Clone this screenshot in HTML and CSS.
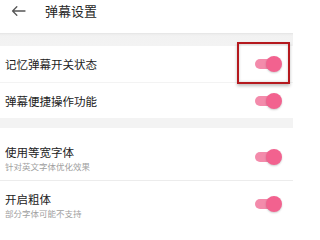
FILE: index.html
```html
<!DOCTYPE html>
<html lang="zh">
<head>
<meta charset="utf-8">
<link rel="stylesheet" href="styles.css">
</head>
<body>
<div class="page">
  <header class="header">
    <svg class="back" width="15" height="10" viewBox="0 0 15 10"><path d="M14 5H1.6M5.8 0.8L1.6 5L5.8 9.2" fill="none" stroke="#555" stroke-width="1.3" stroke-linecap="round" stroke-linejoin="round"/></svg>
    <div class="title">弹幕设置</div>
  </header>
  <div class="gap gap-top"></div>
  <section class="group">
    <div class="row row-a">
      <div class="label">记忆弹幕开关状态</div>
      <div class="toggle"><span class="track"></span><span class="thumb"></span></div>
    </div>
    <div class="row row-b">
      <div class="label">弹幕便捷操作功能</div>
      <div class="toggle"><span class="track"></span><span class="thumb"></span></div>
    </div>
  </section>
  <div class="gap gap-mid"></div>
  <section class="group">
    <div class="row row-c">
      <div class="texts">
        <div class="label">使用等宽字体</div>
        <div class="sub">针对英文字体优化效果</div>
      </div>
      <div class="toggle"><span class="track"></span><span class="thumb"></span></div>
    </div>
    <div class="row row-d">
      <div class="texts">
        <div class="label">开启粗体</div>
        <div class="sub">部分字体可能不支持</div>
      </div>
      <div class="toggle"><span class="track"></span><span class="thumb"></span></div>
    </div>
  </section>
  <div class="highlight"></div>
</div>
</body>
</html>
```
FILE: styles.css
```css
html, body {
  margin: 0;
  padding: 0;
  background: #fff;
}
body {
  font-family: "Noto Sans CJK SC", "Noto Sans", sans-serif;
  color: #222;
  overflow: hidden;
}
.page {
  position: relative;
  width: 293px;
  height: 225px;
  overflow: hidden;
}
.header {
  height: 33px;
  box-sizing: border-box;
  padding-top: 4px;
  display: flex;
  align-items: flex-start;
  background: #fff;
}
.back {
  margin-left: 11px;
  margin-top: 2px;
  display: block;
}
.title {
  margin-left: 19px;
  font-size: 13px;
  line-height: 14px;
  color: #262626;
}
.gap {
  background: #f3f3f3;
}
.gap-top {
  height: 13px;
  background: linear-gradient(#e2e2e2 0, #ececec 1px, #f2f2f2 3px, #f3f3f3 100%);
}
.gap-mid {
  height: 10px;
}
.row {
  display: flex;
  align-items: center;
  justify-content: space-between;
  box-sizing: border-box;
  padding: 0 11px 0 5px;
}
.row-a {
  height: 37px;
  border-bottom: 1px solid #f3f3f3;
}
.row-b {
  height: 35px;
}
.row-c {
  height: 53px;
  align-items: flex-start;
  padding-top: 17px;
  border-bottom: 1px solid #ececec;
}
.row-d {
  height: 43px;
  align-items: flex-start;
  padding-top: 11px;
}
.row-c .toggle { margin-top: 4px; }
.row-d .toggle { margin-top: 4px; }
.label {
  font-size: 11.5px;
  line-height: 14px;
  color: #222;
}
.sub {
  margin-top: 2px;
  font-size: 8.5px;
  line-height: 11px;
  color: #a0a0a0;
}
.toggle {
  position: relative;
  width: 27px;
  height: 16px;
  flex: none;
}
.track {
  position: absolute;
  left: 0;
  top: 3px;
  width: 20px;
  height: 10px;
  border-radius: 5px;
  background: #f38bab;
}
.thumb {
  position: absolute;
  right: 0;
  top: 0;
  width: 16px;
  height: 16px;
  border-radius: 50%;
  background: #f2628f;
  box-shadow: 0 1px 2px rgba(0,0,0,0.2);
}
.highlight {
  position: absolute;
  left: 237px;
  top: 42px;
  width: 53px;
  height: 42px;
  box-sizing: border-box;
  border: 2px solid #b5191e;
  box-shadow: 0 2px 3px rgba(0,0,0,0.25), inset 0 0 3px rgba(0,0,0,0.2);
}
```
